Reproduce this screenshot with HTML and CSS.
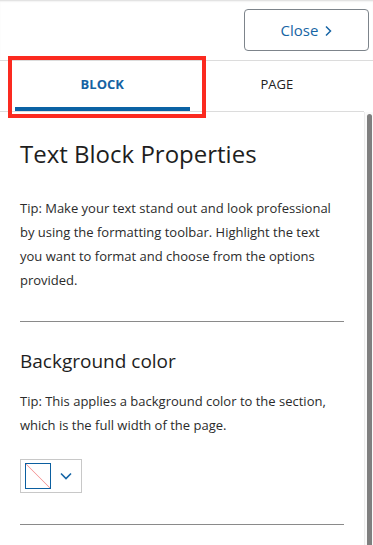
FILE: index.html
```html
<!DOCTYPE html>
<html lang="en">
<head>
  <meta charset="UTF-8">
  <meta name="viewport" content="width=device-width, initial-scale=1.0">
  <title>Text Block Properties</title>
  <link rel="stylesheet" href="styles.css">
</head>
<body>
  <div class="sidebar">
    <div class="topbar">
      <button type="button" class="close-btn">
        Close
        <svg class="close-icon" width="8" height="12" viewBox="0 0 8 12">
          <path d="M2 1.5 L6.5 6 L2 10.5" fill="none" stroke="currentColor" stroke-width="1.5"/>
        </svg>
      </button>
    </div>

    <div class="tabs">
      <div class="tab active">BLOCK</div>
      <div class="tab">PAGE</div>
    </div>

    <div class="panel">
      <div class="panel-content">
        <h1>Text Block Properties</h1>
        <p class="tip">Tip: Make your text stand out and look professional by using the formatting toolbar. Highlight the text you want to format and choose from the options provided.</p>

        <hr class="divider">

        <h2>Background color</h2>
        <p class="tip">Tip: This applies a background color to the section, which is the full width of the page.</p>

        <div class="color-picker">
          <span class="swatch"></span>
          <svg class="chevron" width="12" height="8" viewBox="0 0 12 8">
            <path d="M1 1.5 L6 6.5 L11 1.5" fill="none" stroke="currentColor" stroke-width="1.6"/>
          </svg>
        </div>

        <hr class="divider">
      </div>
      <div class="scrollbar">
        <div class="thumb"></div>
      </div>
    </div>
  </div>

  <div class="highlight"></div>
</body>
</html>
```

FILE: styles.css
```css
/* General Styles */
body {
  font-family: "Open Sans", Arial, sans-serif;
  background-color: #ffffff;
  margin: 0;
  padding: 0;
  color: #222;
  height: 545px;
  overflow: hidden;
}

.sidebar {
  position: relative;
  display: flex;
  flex-direction: column;
  height: 545px;
}

/* Top bar */
.topbar {
  display: flex;
  justify-content: flex-end;
  padding: 9px 4px 0 0;
  height: 51px;
  border-bottom: 1px solid #dcdcdc;
  box-shadow: inset 0 2px 2px -1px rgba(0, 0, 0, 0.15);
}

.close-btn {
  display: flex;
  align-items: center;
  justify-content: center;
  gap: 6px;
  width: 125px;
  height: 42px;
  padding: 0;
  background: #fff;
  border: 1px solid #7d848b;
  border-radius: 4px;
  color: #1765a5;
  font-family: inherit;
  font-size: 15px;
  cursor: pointer;
}

.close-icon {
  margin-top: 1px;
}

/* Tabs */
.tabs {
  display: flex;
  padding-left: 15px;
  width: 349px;
  border-bottom: 1px solid #dcdcdc;
}

.tab {
  width: 175px;
  height: 50px;
  box-sizing: border-box;
  border-bottom: 4px solid transparent;
  display: flex;
  align-items: center;
  justify-content: center;
  font-size: 13px;
  color: #222;
}

.tab.active {
  font-weight: bold;
  color: #1562a3;
  border-bottom-color: #0b62a4;
}

/* Scrolling panel */
.panel {
  flex: 1;
  display: flex;
  min-height: 0;
}

.panel-content {
  flex: 1;
  padding: 0 20px;
}

h1 {
  margin: 25px 0 0;
  font-size: 24px;
  font-weight: normal;
  line-height: 34px;
  color: #1e1e1e;
}

h2 {
  margin: 26px 0 0;
  font-size: 19px;
  font-weight: normal;
  line-height: 27px;
  color: #1e1e1e;
}

.tip {
  margin: 25px 0 0;
  font-size: 13px;
  line-height: 24px;
  color: #2b2b2b;
}

h2 + .tip {
  margin-top: 14px;
}

.divider {
  margin: 29px 0 0;
  border: none;
  border-top: 1px solid #8a8a8a;
}

.color-picker {
  display: flex;
  align-items: center;
  gap: 9px;
  margin-top: 22px;
  padding-left: 4px;
  box-sizing: border-box;
  width: 62px;
  height: 34px;
  border: 1px solid #c8c8c8;
}

.swatch {
  width: 26px;
  height: 26px;
  box-sizing: border-box;
  border: 1px solid #0b5fa0;
  background: linear-gradient(to bottom left, transparent calc(50% - 0.8px), #f5a3a3 50%, transparent calc(50% + 0.8px));
}

.chevron {
  color: #1565a6;
}

.color-picker + .divider {
  margin-top: 31px;
}

.scrollbar {
  width: 9px;
  box-sizing: border-box;
  border-left: 1px solid #ececec;
  background: #fafafa;
  padding: 2px 1px 0 2px;
}

.thumb {
  height: 100%;
  background-color: #7f7f7f;
  border-radius: 3px 3px 0 0;
}

/* Annotation */
.highlight {
  position: absolute;
  left: 8px;
  top: 56px;
  width: 190px;
  height: 54px;
  border: 4px solid #fb2a20;
}
```
